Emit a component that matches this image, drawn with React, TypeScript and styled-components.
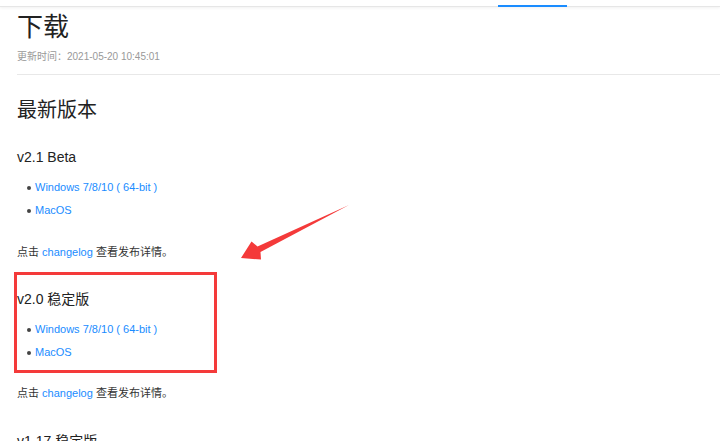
import styled, { createGlobalStyle } from 'styled-components'

const GlobalStyle = createGlobalStyle`
  html, body {
    margin: 0;
    padding: 0;
    background: #fff;
  }
  body {
    font-family: "Liberation Sans", "Noto Sans CJK SC", sans-serif;
    color: #333;
    overflow: hidden;
  }
`

const Page = styled.div`
  position: relative;
  width: 720px;
  height: 441px;
  overflow: hidden;
`

const NavBar = styled.div`
  position: relative;
  height: 6px;
  border-bottom: 1px solid #e6e6e6;
  box-shadow: 0 1px 3px rgba(0, 0, 0, 0.06);
`

const NavIndicator = styled.span`
  position: absolute;
  left: 498px;
  bottom: -1px;
  width: 69px;
  height: 2px;
  background: #1a8cff;
`

const Main = styled.main`
  padding-left: 17px;
`

const Title = styled.h1`
  margin: 0;
  font-size: 26px;
  line-height: 40px;
  font-weight: 400;
  color: #222;
`

const UpdatedAt = styled.div`
  font-size: 10px;
  line-height: 20px;
  color: #999;
`

const Rule = styled.hr`
  margin: 7px 0 0;
  border: 0;
  border-top: 1px solid #e8e8e8;
`

const SectionTitle = styled.h2`
  margin: 20px 0 0;
  font-size: 20px;
  line-height: 30px;
  font-weight: 400;
  color: #222;
`

const VersionTitle = styled.h3<{ $gap: number }>`
  margin: ${(p) => p.$gap}px 0 0;
  font-size: 14px;
  line-height: 24px;
  font-weight: 400;
  color: #222;
`

const LinkList = styled.ul`
  list-style: none;
  margin: 7px 0 0;
  padding: 0;
`

const LinkItem = styled.li`
  display: flex;
  align-items: center;
  padding-left: 10px;
  font-size: 11px;
  line-height: 23px;
  &::before {
    content: '';
    width: 4px;
    height: 4px;
    border-radius: 50%;
    background: #444;
    margin-right: 4px;
  }
`

const Link = styled.a`
  color: #1a8cff;
  text-decoration: none;
`

const Note = styled.p<{ $gap: number }>`
  margin: ${(p) => p.$gap}px 0 0;
  font-size: 11px;
  line-height: 20px;
  color: #333;
`

// red annotation box drawn around the v2.0 block
const Highlight = styled.div`
  margin-left: -3px;
  margin-top: 10px;
  width: 197px;
  border: 3px solid #f43a3a;
  padding: 12px 0 6px;
`

const Arrow = styled.svg`
  position: absolute;
  left: 0;
  top: 0;
  pointer-events: none;
`

function Downloads() {
  return (
    <LinkList>
      <LinkItem>
        <Link href='#'>Windows 7/8/10 ( 64-bit )</Link>
      </LinkItem>
      <LinkItem>
        <Link href='#'>MacOS</Link>
      </LinkItem>
    </LinkList>
  )
}

function ChangelogNote({ gap }: { gap: number }) {
  return (
    <Note $gap={gap}>
      点击 <Link href='#'>changelog</Link> 查看发布详情。
    </Note>
  )
}

export default function App() {
  return (
    <Page>
      <GlobalStyle />
      <NavBar>
        <NavIndicator />
      </NavBar>
      <Main>
        <Title>下载</Title>
        <UpdatedAt>更新时间：2021-05-20 10:45:01</UpdatedAt>
        <Rule />
        <SectionTitle>最新版本</SectionTitle>
        <VersionTitle $gap={20}>v2.1 Beta</VersionTitle>
        <Downloads />
        <ChangelogNote gap={20} />
        <Highlight>
          <VersionTitle $gap={0}>v2.0 稳定版</VersionTitle>
          <Downloads />
        </Highlight>
        <ChangelogNote gap={10} />
        <VersionTitle $gap={26}>v1.17 稳定版</VersionTitle>
      </Main>
      <Arrow width='720' height='441' viewBox='0 0 720 441'>
        <polygon
          points='241,258 251.5,241.5 257.5,246.5 349,205 260.5,252 261,259.5'
          fill='#f43a3a'
        />
      </Arrow>
    </Page>
  )
}
